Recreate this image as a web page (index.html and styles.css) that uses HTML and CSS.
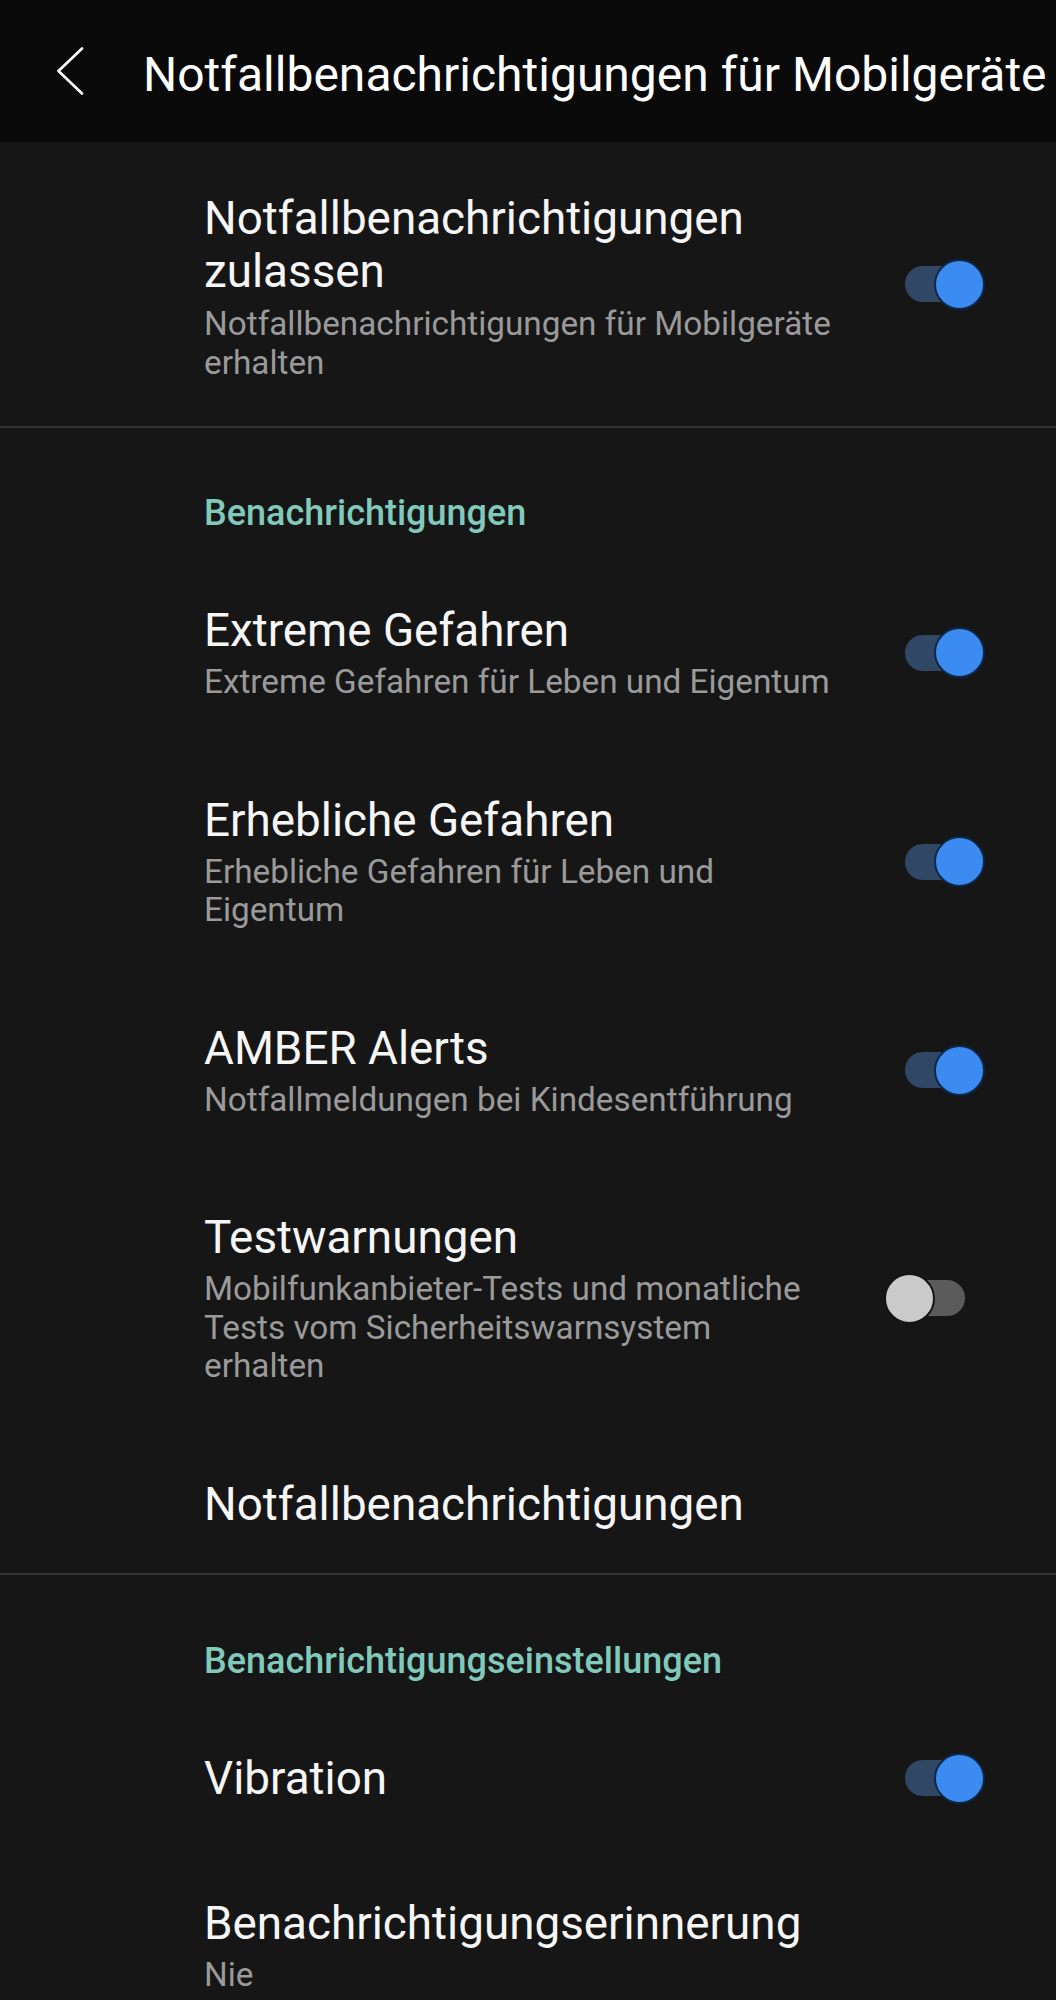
FILE: index.html
```html
<!DOCTYPE html>
<html lang="de">
<head>
<meta charset="utf-8">
<title>Notfallbenachrichtigungen für Mobilgeräte</title>
<link rel="stylesheet" href="styles.css">
</head>
<body>
<div class="screen">
  <header class="appbar">
    <svg class="back" width="28" height="48" viewBox="0 0 28 48" aria-hidden="true">
      <path d="M26 1.5 L2.5 24 L26 46.5" fill="none" stroke="#ffffff" stroke-width="2.6" stroke-linecap="round" stroke-linejoin="round"/>
    </svg>
    <h1 class="appbar-title">Notfallbenachrichtigungen für Mobilgeräte</h1>
  </header>

  <section class="group">
    <div class="row row-first">
      <div class="text">
        <div class="title">Notfallbenachrichtigungen zulassen</div>
        <div class="sub">Notfallbenachrichtigungen für Mobilgeräte erhalten</div>
      </div>
      <div class="switch on"><span class="track"></span><span class="knob"></span></div>
    </div>
  </section>

  <div class="divider"></div>

  <section class="group">
    <div class="group-head">Benachrichtigungen</div>
    <div class="row">
      <div class="text">
        <div class="title">Extreme Gefahren</div>
        <div class="sub">Extreme Gefahren für Leben und Eigentum</div>
      </div>
      <div class="switch on"><span class="track"></span><span class="knob"></span></div>
    </div>
    <div class="row">
      <div class="text">
        <div class="title">Erhebliche Gefahren</div>
        <div class="sub">Erhebliche Gefahren für Leben und Eigentum</div>
      </div>
      <div class="switch on"><span class="track"></span><span class="knob"></span></div>
    </div>
    <div class="row">
      <div class="text">
        <div class="title">AMBER Alerts</div>
        <div class="sub">Notfallmeldungen bei Kindesentführung</div>
      </div>
      <div class="switch on"><span class="track"></span><span class="knob"></span></div>
    </div>
    <div class="row">
      <div class="text">
        <div class="title">Testwarnungen</div>
        <div class="sub">Mobilfunkanbieter-Tests und monatliche Tests vom Sicherheitswarnsystem erhalten</div>
      </div>
      <div class="switch off"><span class="track"></span><span class="knob"></span></div>
    </div>
    <div class="row row-last">
      <div class="text">
        <div class="title">Notfallbenachrichtigungen</div>
      </div>
    </div>
  </section>

  <div class="divider"></div>

  <section class="group">
    <div class="group-head group-head-2">Benachrichtigungseinstellungen</div>
    <div class="row">
      <div class="text">
        <div class="title">Vibration</div>
      </div>
      <div class="switch on"><span class="track"></span><span class="knob"></span></div>
    </div>
    <div class="row">
      <div class="text">
        <div class="title">Benachrichtigungserinnerung</div>
        <div class="sub">Nie</div>
      </div>
    </div>
  </section>
</div>
</body>
</html>
```

FILE: styles.css
```css
html, body {
  margin: 0;
  padding: 0;
  background: #161616;
}

body {
  font-family: Roboto, "Noto Sans", "Liberation Sans", sans-serif;
  color: #f4f4f4;
}

.screen {
  width: 1056px;
  min-height: 2000px;
  background: #161616;
  overflow: hidden;
}

.appbar {
  height: 142px;
  box-sizing: border-box;
  background: #0a0a0a;
  display: flex;
  align-items: flex-start;
  padding: 47px 0 0 56px;
}

.back {
  flex: none;
  display: block;
}

.appbar-title {
  margin: 0 0 0 59px;
  font-size: 48px;
  font-weight: 400;
  line-height: 56px;
  color: #ffffff;
  white-space: nowrap;
}

.group-head {
  padding: 65px 0 25px 204px;
  font-size: 36px;
  font-weight: 500;
  line-height: 40px;
  color: #80c9bb;
}

.group-head-2 {
  padding-top: 66px;
}

.row {
  display: flex;
  align-items: center;
  padding: 46px 71px 46px 204px;
}

.row-first {
  padding-top: 50px;
  padding-bottom: 44px;
}

.row-last {
  padding-bottom: 42px;
}

.row-first .switch {
  margin-top: -6px;
}

.text {
  flex: 1;
  min-width: 0;
}

.title {
  font-size: 45.8px;
  line-height: 53px;
  color: #f6f6f6;
}

.sub {
  margin-top: 6px;
  font-size: 33.3px;
  line-height: 38.5px;
  color: #9a9a9a;
}

.row-first .sub {
  margin-top: 7px;
}

.switch {
  flex: none;
  position: relative;
  width: 101px;
  height: 51px;
  margin-left: 49px;
}

.track {
  position: absolute;
  left: 21px;
  top: 7.5px;
  width: 60px;
  height: 36px;
  border-radius: 18px;
}

.knob {
  position: absolute;
  top: 0;
  width: 51px;
  height: 51px;
  border-radius: 50%;
  box-sizing: border-box;
}

.on .track {
  background: #304766;
}

.on .knob {
  right: 0;
  background: #3c8bf1;
  border: 2px solid #0d2746;
}

.off .track {
  background: #5b5b5b;
}

.off .knob {
  left: 0;
  background: #cacaca;
  border: 2px solid #141414;
}

.divider {
  height: 2px;
  background: #333333;
}
```
